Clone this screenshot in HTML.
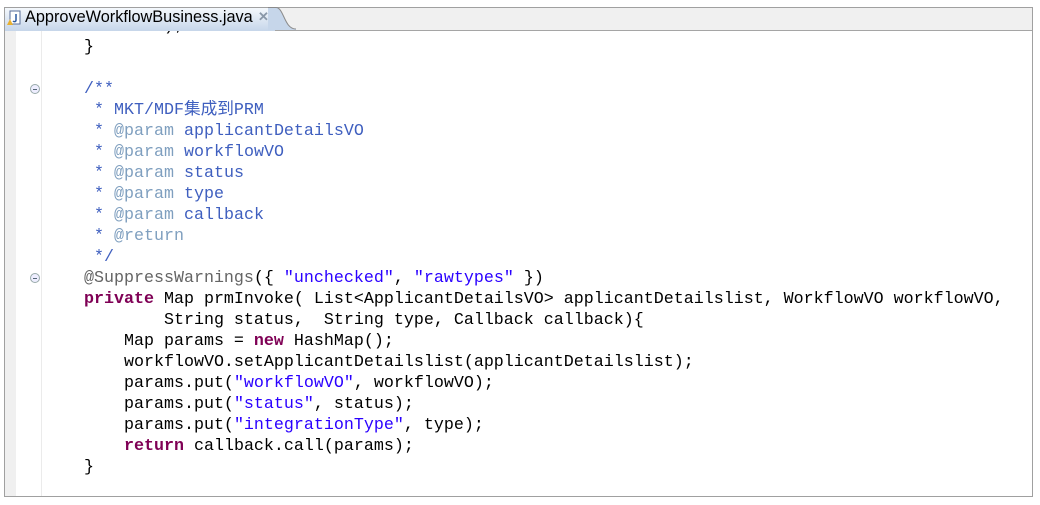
<!DOCTYPE html>
<html><head><meta charset="utf-8"><style>
body{margin:0;width:1040px;height:505px;background:#fff;position:relative;overflow:hidden}
.frame{position:absolute;left:4px;top:7px;width:1029px;height:490px;border:1px solid #a0a0a0;box-sizing:border-box;background:#fff}
.tabbar{position:absolute;left:5px;top:8px;width:1027px;height:22px;background:#f0f0f0;border-bottom:1px solid #a5a5a5}
.tab{position:absolute;left:5px;top:8px;width:270px;height:23px;background:linear-gradient(#f4f8fc,#c6d6ea);}
.curve{position:absolute;left:268px;top:7px}
.tabtext{position:absolute;left:25px;top:8px;font:16.3px "Liberation Sans",sans-serif;color:#000}
.ruler{position:absolute;left:5px;top:31px;width:11px;height:465px;background:#f0f0f0}
.vline{position:absolute;left:41px;top:31px;width:1px;height:465px;background:#ebebeb}
pre{position:absolute;left:84px;top:16px;margin:0;font:16.67px/21px "Liberation Mono","Noto Sans CJK SC",monospace;color:#000}
.c{color:#3f5fbf}.t{color:#7f9fbf}.k{color:#7f0055;font-weight:bold}.s{color:#2a00ff}.a{color:#646464}
.fold{position:absolute;left:30px;width:8px;height:8px;border:1px solid #9aa;border-radius:50%;background:#eef}
.fold:after{content:"";position:absolute;left:2px;top:3.5px;width:4px;height:1px;background:#567}
</style></head><body>
<div class="frame"></div>
<div class="ruler"></div><div class="vline"></div>
<div class="fold" style="top:84px"></div>
<div class="fold" style="top:273px"></div>
<pre>        );
}

<span class="c">/**</span>
<span class="c"> * MKT/MDF集成到PRM</span>
<span class="c"> * <span class="t">@param</span> applicantDetailsVO</span>
<span class="c"> * <span class="t">@param</span> workflowVO</span>
<span class="c"> * <span class="t">@param</span> status</span>
<span class="c"> * <span class="t">@param</span> type</span>
<span class="c"> * <span class="t">@param</span> callback</span>
<span class="c"> * <span class="t">@return</span></span>
<span class="c"> */</span>
<span class="a">@SuppressWarnings</span>({ <span class="s">"unchecked"</span>, <span class="s">"rawtypes"</span> })
<span class="k">private</span> Map prmInvoke( List&lt;ApplicantDetailsVO&gt; applicantDetailslist, WorkflowVO workflowVO,
        String status,  String type, Callback callback){
    Map params = <span class="k">new</span> HashMap();
    workflowVO.setApplicantDetailslist(applicantDetailslist);
    params.put(<span class="s">"workflowVO"</span>, workflowVO);
    params.put(<span class="s">"status"</span>, status);
    params.put(<span class="s">"integrationType"</span>, type);
    <span class="k">return</span> callback.call(params);
}</pre>
<div class="tabbar"></div>
<div class="tab"></div>
<svg class="curve" width="30" height="24"><path d="M0 0 H8 C16 0 16 22 28 22 V23 H0Z" fill="#c6d6ea"/><path d="M0 0.5 H8 C16 0.5 16 22 28 22" stroke="#8a8a8a" fill="none"/></svg>
<svg style="position:absolute;left:7px;top:10px" width="14" height="16"><rect x="3" y="1" width="10" height="13" fill="#fff" stroke="#5a6f9a"/><path d="M9 4v6c0 2-2 2-3 1" stroke="#2c5aa0" stroke-width="1.5" fill="none"/><path d="M0 15l3-6 3 6z" fill="#e8b030"/></svg>
<div class="tabtext">ApproveWorkflowBusiness.java</div>
<div style="position:absolute;left:258px;top:9px;font:bold 13px 'Liberation Sans';color:#8a98a8">✕</div>
</body></html>
